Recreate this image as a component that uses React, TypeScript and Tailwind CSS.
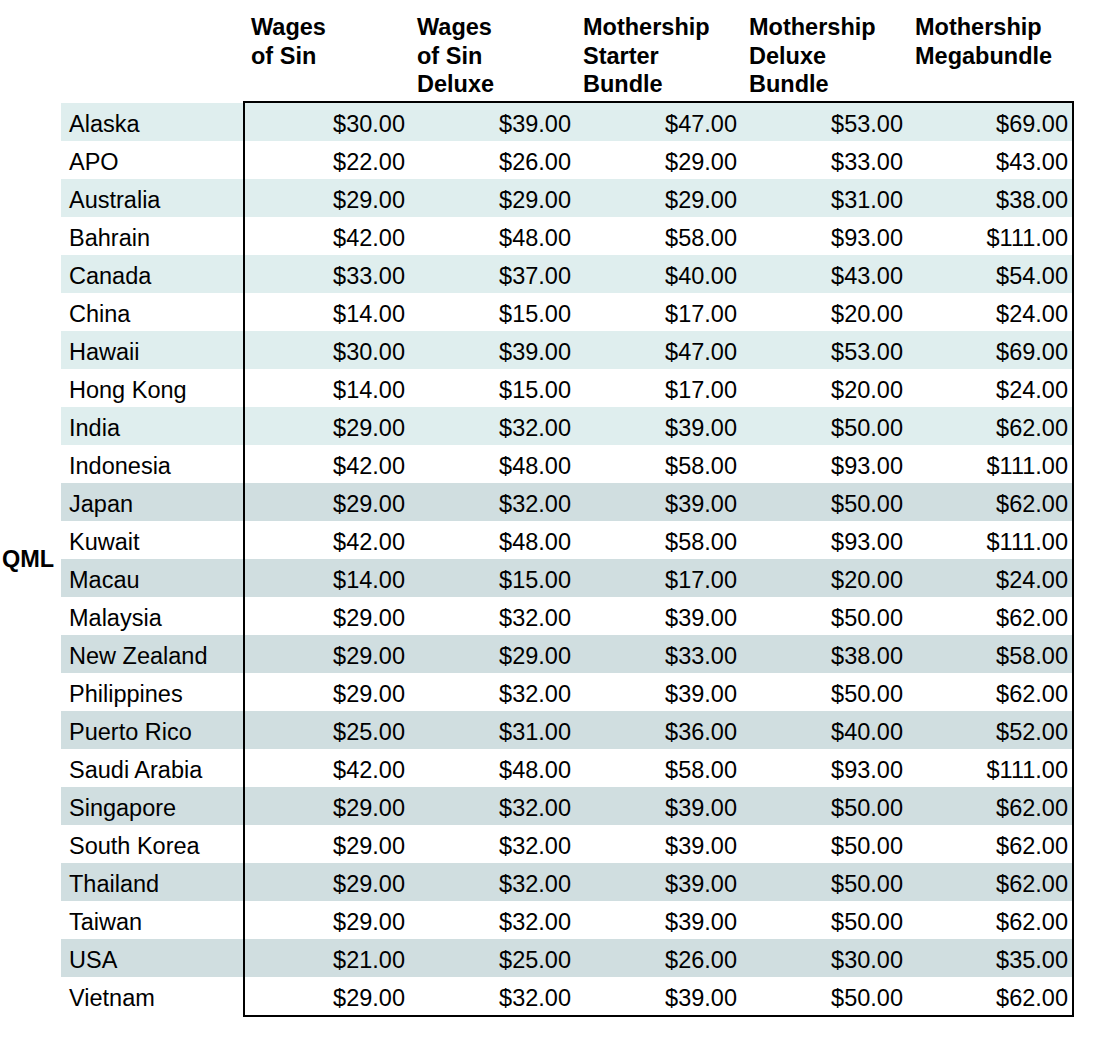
import React from "react";

type Row = [string, string, string, string, string, string];

const rows: Row[] = [
  ["Alaska", "$30.00", "$39.00", "$47.00", "$53.00", "$69.00"],
  ["APO", "$22.00", "$26.00", "$29.00", "$33.00", "$43.00"],
  ["Australia", "$29.00", "$29.00", "$29.00", "$31.00", "$38.00"],
  ["Bahrain", "$42.00", "$48.00", "$58.00", "$93.00", "$111.00"],
  ["Canada", "$33.00", "$37.00", "$40.00", "$43.00", "$54.00"],
  ["China", "$14.00", "$15.00", "$17.00", "$20.00", "$24.00"],
  ["Hawaii", "$30.00", "$39.00", "$47.00", "$53.00", "$69.00"],
  ["Hong Kong", "$14.00", "$15.00", "$17.00", "$20.00", "$24.00"],
  ["India", "$29.00", "$32.00", "$39.00", "$50.00", "$62.00"],
  ["Indonesia", "$42.00", "$48.00", "$58.00", "$93.00", "$111.00"],
  ["Japan", "$29.00", "$32.00", "$39.00", "$50.00", "$62.00"],
  ["Kuwait", "$42.00", "$48.00", "$58.00", "$93.00", "$111.00"],
  ["Macau", "$14.00", "$15.00", "$17.00", "$20.00", "$24.00"],
  ["Malaysia", "$29.00", "$32.00", "$39.00", "$50.00", "$62.00"],
  ["New Zealand", "$29.00", "$29.00", "$33.00", "$38.00", "$58.00"],
  ["Philippines", "$29.00", "$32.00", "$39.00", "$50.00", "$62.00"],
  ["Puerto Rico", "$25.00", "$31.00", "$36.00", "$40.00", "$52.00"],
  ["Saudi Arabia", "$42.00", "$48.00", "$58.00", "$93.00", "$111.00"],
  ["Singapore", "$29.00", "$32.00", "$39.00", "$50.00", "$62.00"],
  ["South Korea", "$29.00", "$32.00", "$39.00", "$50.00", "$62.00"],
  ["Thailand", "$29.00", "$32.00", "$39.00", "$50.00", "$62.00"],
  ["Taiwan", "$29.00", "$32.00", "$39.00", "$50.00", "$62.00"],
  ["USA", "$21.00", "$25.00", "$26.00", "$30.00", "$35.00"],
  ["Vietnam", "$29.00", "$32.00", "$39.00", "$50.00", "$62.00"],
];

const headers: string[][] = [
  ["Wages", "of Sin"],
  ["Wages", "of Sin", "Deluxe"],
  ["Mothership", "Starter", "Bundle"],
  ["Mothership", "Deluxe", "Bundle"],
  ["Mothership", "Megabundle"],
];

function rowBg(i: number): string {
  if (i % 2 === 1) return "bg-white";
  return i < 10 ? "bg-[#dfeeee]" : "bg-[#d0dee0]";
}

export default function App() {
  return (
    <div
      className="bg-white text-black w-[1096px] h-[1040px] text-[23.5px]"
      style={{ fontFamily: '"Liberation Sans", Arial, Helvetica, sans-serif' }}
    >
      <div className="flex">
        <div className="w-[61px] flex flex-col">
          <div className="h-[101px]" />
          <div className="flex-1 flex items-center pt-[2px]">
            <span className="font-bold pl-[2px] leading-none">QML</span>
          </div>
        </div>
        <div className="flex flex-col">
          <div className="flex h-[101px]">
            <div className="w-[182px]" />
            {headers.map((h, i) => (
              <div
                key={i}
                className="w-[166px] pl-[8px] pt-[13px] font-bold leading-[28.5px] whitespace-nowrap"
              >
                {h.map((line, j) => (
                  <div key={j}>{line}</div>
                ))}
              </div>
            ))}
          </div>
          <div className="flex">
            <div className="w-[182px] flex flex-col pt-[2px]">
              {rows.map((r, i) => (
                <div
                  key={r[0]}
                  className={`h-[38px] pt-[4px] leading-[34px] pl-[8px] whitespace-nowrap ${rowBg(i)}`}
                >
                  {r[0]}
                </div>
              ))}
            </div>
            <div className="border-2 border-black flex flex-col w-[831px]">
              {rows.map((r, i) => (
                <div key={r[0]} className={`flex h-[38px] pt-[4px] leading-[34px] ${rowBg(i)}`}>
                  <div className="w-[166px] text-right pr-[6px]">{r[1]}</div>
                  <div className="w-[166px] text-right pr-[6px]">{r[2]}</div>
                  <div className="w-[166px] text-right pr-[6px]">{r[3]}</div>
                  <div className="w-[166px] text-right pr-[6px]">{r[4]}</div>
                  <div className="w-[163px] text-right pr-[4px]">{r[5]}</div>
                </div>
              ))}
            </div>
          </div>
        </div>
      </div>
    </div>
  );
}
